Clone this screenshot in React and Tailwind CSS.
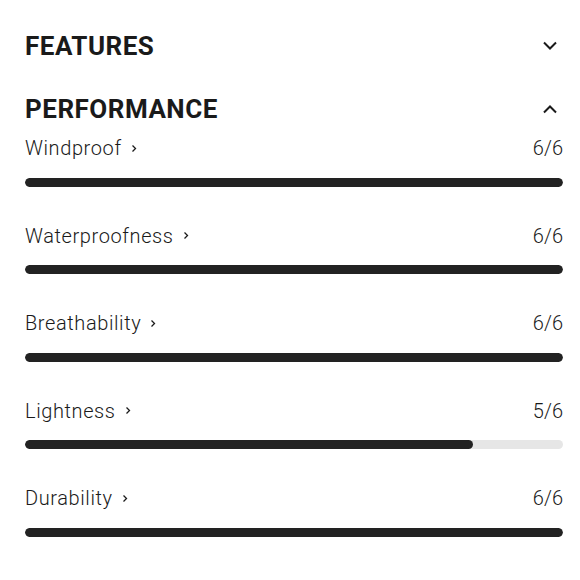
import React from "react";

const rows = [
  { label: "Windproof", value: 6 },
  { label: "Waterproofness", value: 6 },
  { label: "Breathability", value: 6 },
  { label: "Lightness", value: 5 },
  { label: "Durability", value: 6 },
];

function Chevron({ up }) {
  return (
    <svg width="16" height="10" viewBox="0 0 16 10" fill="none">
      <path
        d={up ? "M2 8.5L8 2.5L14 8.5" : "M2 1.5L8 7.5L14 1.5"}
        stroke="#1a1a1a"
        strokeWidth="2"
      />
    </svg>
  );
}

function Small() {
  return (
    <svg width="6" height="9" viewBox="0 0 6 9" fill="none" className="ml-[9px]">
      <path d="M1.5 1.5L4.5 4.5L1.5 7.5" stroke="#1a1a1a" strokeWidth="1.3" />
    </svg>
  );
}

export default function App() {
  return (
    <div
      className="w-[580px] h-[580px] bg-white pl-[25px] pr-[17px] pt-[30px] text-[#1a1a1a] overflow-hidden"
      style={{ fontFamily: "Roboto, 'Liberation Sans', sans-serif" }}
    >
      <div className="flex items-center justify-between h-[32px] pr-[5px]">
        <span className="text-[26px] font-bold leading-[32px] tracking-[0.5px]">FEATURES</span>
        <Chevron />
      </div>
      <div className="flex items-center justify-between h-[32px] mt-[31px] pr-[5px]">
        <span className="text-[26px] font-bold leading-[32px] tracking-[0.5px]">PERFORMANCE</span>
        <Chevron up />
      </div>
      <div className="mt-[9px] flex flex-col">
        {rows.map((r) => (
          <div key={r.label} className="flex flex-col mb-[35px]">
            <div className="flex items-center justify-between h-[28px]">
              <div className="flex items-center">
                <span className="text-[20px] font-light leading-[28px] tracking-[0.6px]">{r.label}</span>
                <Small />
              </div>
              <span className="text-[20px] font-light leading-[28px]">{r.value}/6</span>
            </div>
            <div className="mt-[15.5px] h-[9px] w-full rounded-full bg-[#e6e6e6] overflow-hidden">
              <div
                className="h-full rounded-full bg-[#222222]"
                style={{ width: `${(r.value / 6) * 100}%` }}
              />
            </div>
          </div>
        ))}
      </div>
    </div>
  );
}
